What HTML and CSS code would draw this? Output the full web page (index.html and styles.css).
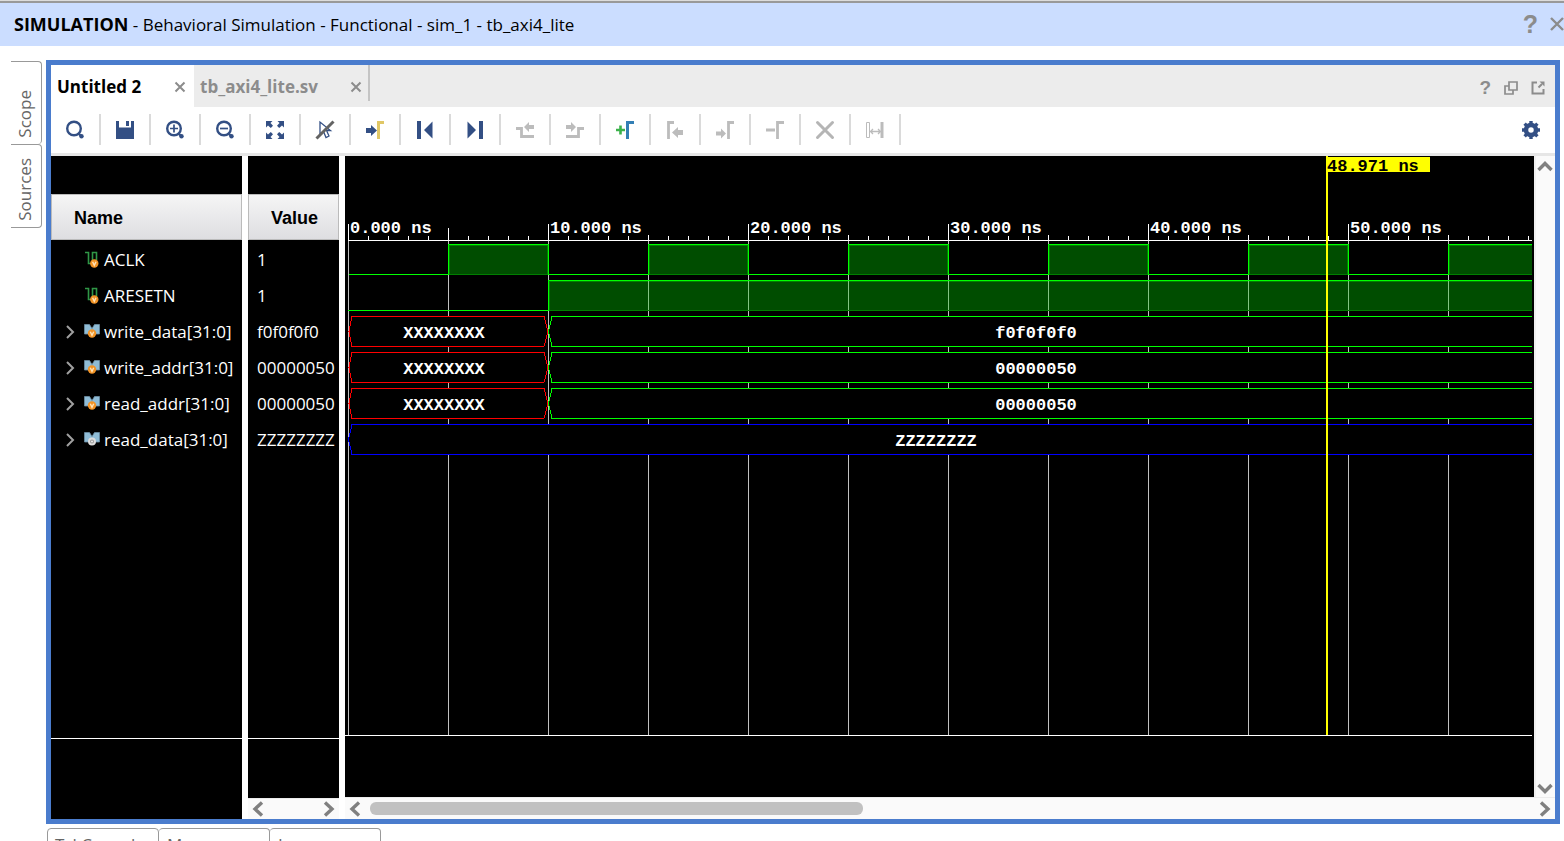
FILE: index.html
```html
<!DOCTYPE html>
<html lang="en">
<head>
<meta charset="utf-8">
<title>Behavioral Simulation</title>
<link rel="stylesheet" href="styles.css">
</head>
<body>
<header class="titlebar">
  <h1 class="title"><strong>SIMULATION</strong> - Behavioral Simulation - Functional - sim_1 - tb_axi4_lite</h1>
  <button class="plain help" aria-label="Help">?</button>
  <button class="plain" aria-label="Close"><svg width="14" height="14" viewBox="0 0 14 14"><path d="M1 1L13 13M13 1L1 13" stroke="#8c8c8c" stroke-width="2.400"/></svg></button>
</header>

<div class="workspace">
  <nav class="side-tabs">
    <button class="side-tab"><span>Scope</span></button>
    <button class="side-tab"><span>Sources</span></button>
  </nav>

  <main class="panel">
    <div class="tabbar">
      <div class="tab active">
        <button class="plain tab-name">Untitled 2</button>
        <button class="plain" aria-label="Close Untitled 2"><svg width="12" height="12" viewBox="0 0 12 12"><path d="M1.500 1.500L10.500 10.500M10.500 1.500L1.500 10.500" stroke="#8c8c8c" stroke-width="2"/></svg></button>
      </div>
      <div class="tab">
        <button class="plain tab-name">tb_axi4_lite.sv</button>
        <button class="plain" aria-label="Close tb_axi4_lite.sv"><svg width="12" height="12" viewBox="0 0 12 12"><path d="M1.500 1.500L10.500 10.500M10.500 1.500L1.500 10.500" stroke="#8c8c8c" stroke-width="2"/></svg></button>
      </div>
      <div class="window-tools">
        <button class="plain help-small" aria-label="Help">?</button>
        <button class="plain" aria-label="Restore"><svg width="14" height="14" viewBox="0 0 14 14" fill="none" stroke="#8c8c8c" stroke-width="1.700"><path d="M5 1h8v8H5zM5 5H1V13h8V9"/></svg></button>
        <button class="plain" aria-label="Float"><svg width="14" height="14" viewBox="0 0 14 14" fill="none" stroke="#8c8c8c" stroke-width="2"><path d="M6 1.500H1.500V12.500H12.500V8M7.500 6.500L11 3"/><path d="M8.500 0.500h5v5z" fill="#8c8c8c" stroke="none"/></svg></button>
      </div>
    </div>

    <div class="toolbar">
      <button class="tool" aria-label="Search"><svg width="20" height="20" viewBox="0 0 20 20"><circle cx="9" cy="8.500" r="6.800" fill="none" stroke="#334f84" stroke-width="2.400"/><path d="M13.500 13.500L16 16" stroke="#334f84" stroke-width="2.400"/><circle cx="16.500" cy="16.300" r="2.200" fill="#334f84"/></svg></button>
      <button class="tool" aria-label="Save"><svg width="20" height="20" viewBox="0 0 20 20" fill="#334f84"><path d="M1 1h3v6.500h12V1h3v18H1z"/><path d="M11 1h3v5h-3z"/></svg></button>
      <button class="tool" aria-label="Zoom in"><svg width="20" height="20" viewBox="0 0 20 20"><circle cx="9" cy="8.500" r="6.800" fill="none" stroke="#334f84" stroke-width="2.400"/><path d="M13.500 13.500L16 16" stroke="#334f84" stroke-width="2.400"/><circle cx="16.500" cy="16.300" r="2.200" fill="#334f84"/><path d="M5 8.500h8M9 4.500v8" stroke="#334f84" stroke-width="1.700"/></svg></button>
      <button class="tool" aria-label="Zoom out"><svg width="20" height="20" viewBox="0 0 20 20"><circle cx="9" cy="8.500" r="6.800" fill="none" stroke="#334f84" stroke-width="2.400"/><path d="M13.500 13.500L16 16" stroke="#334f84" stroke-width="2.400"/><circle cx="16.500" cy="16.300" r="2.200" fill="#334f84"/><path d="M5 8.500h8" stroke="#334f84" stroke-width="1.700"/></svg></button>
      <button class="tool" aria-label="Zoom fit"><svg width="20" height="20" viewBox="0 0 20 20" fill="#334f84"><path d="M1 1h6.500L5.500 3 8 5.800 5.800 8 3 5.500 1 7.500zM19 1v6.500L17 5.500 14.200 8 12 5.800 14.500 3 12.500 1zM1 19v-6.500L3 14.500 5.800 12 8 14.200 5.500 17 7.500 19zM19 19h-6.500L14.500 17 12 14.200 14.200 12 17 14.500 19 12.500z"/></svg></button>
      <button class="tool" aria-label="Clear selection"><svg width="20" height="20" viewBox="0 0 20 20"><path d="M5 2V14L8.500 11.500 11 17.500 14 16 11.500 10.500H15.500z" fill="#fff" stroke="#334f84" stroke-width="1.300"/><path d="M1.500 18.500L18.500 1.500" stroke="#636363" stroke-width="3"/></svg></button>
      <button class="tool" aria-label="Go to cursor"><svg width="20" height="20" viewBox="0 0 20 20"><path d="M1 8h5V5l6 5.500L6 16v-3H1z" fill="#334f84"/><path d="M13.500 19V2.500H19" fill="none" stroke="#e0c766" stroke-width="3"/></svg></button>
      <button class="tool" aria-label="Go to start"><svg width="20" height="20" viewBox="0 0 20 20" fill="#334f84"><path d="M2 1h4v18H2zM17.500 1.500v17L9 10z"/></svg></button>
      <button class="tool" aria-label="Go to end"><svg width="20" height="20" viewBox="0 0 20 20" fill="#334f84"><path d="M14 1h4v18h-4zM2.500 1.500v17L11 10z"/></svg></button>
      <button class="tool" aria-label="Previous transition"><svg width="20" height="20" viewBox="0 0 20 20"><path d="M1 8.500H6.500V16.500H19" fill="none" stroke="#bcbcbc" stroke-width="2.800"/><path d="M9 7l5-5v3h5v4h-5v3z" fill="#bcbcbc"/></svg></button>
      <button class="tool" aria-label="Next transition"><svg width="20" height="20" viewBox="0 0 20 20"><path d="M19 8.500H13.500V16.500H1" fill="none" stroke="#bcbcbc" stroke-width="2.800"/><path d="M11 7L6 2v3H1v4h5v3z" fill="#bcbcbc"/></svg></button>
      <button class="tool" aria-label="Add marker"><svg width="20" height="20" viewBox="0 0 20 20" fill="none"><path d="M1 10h9M5.500 5.500v9" stroke="#3cb24b" stroke-width="2.600"/><path d="M12.500 19V2.500H19" stroke="#337fb5" stroke-width="3"/></svg></button>
      <button class="tool" aria-label="Previous marker"><svg width="20" height="20" viewBox="0 0 20 20"><path d="M3.500 19V2.500H9" fill="none" stroke="#bcbcbc" stroke-width="2.800"/><path d="M7 12.500L13 7v3h5v5h-5v3z" fill="#bcbcbc"/></svg></button>
      <button class="tool" aria-label="Next marker"><svg width="20" height="20" viewBox="0 0 20 20"><path d="M13.500 19V2.500H19" fill="none" stroke="#bcbcbc" stroke-width="2.800"/><path d="M11 13.500L6 8.500v3H1v4h5v3z" fill="#bcbcbc"/></svg></button>
      <button class="tool" aria-label="Remove marker"><svg width="20" height="20" viewBox="0 0 20 20" fill="none" stroke="#bcbcbc" stroke-width="2.800"><path d="M1 10h9M12.500 19V2.500H19"/></svg></button>
      <button class="tool" aria-label="Remove all"><svg width="20" height="20" viewBox="0 0 20 20"><path d="M2.500 2.500L17.500 17.500M17.500 2.500L2.500 17.500" stroke="#b5b5b5" stroke-width="3" stroke-linecap="round"/></svg></button>
      <button class="tool" aria-label="Measure"><svg width="20" height="20" viewBox="0 0 20 20" fill="none" stroke="#bcbcbc"><path d="M1.500 2.500h3v15h-3z"/><path d="M17 2v16" stroke-width="3"/><path d="M6 11.500h9M8 9L5.500 11.500 8 14M13 9l2.500 2.500L13 14" stroke-width="1.300"/></svg></button>
      <button class="plain settings" aria-label="Settings"><svg width="20" height="20" viewBox="0 0 20 20" fill="none" stroke="#334f84"><circle cx="10" cy="10" r="5" stroke-width="4.500"/><path d="M10 1v3M10 16v3M1 10h3M16 10h3M3.600 3.600l2 2M14.400 14.400l2 2M3.600 16.400l2-2M14.400 5.600l2-2" stroke-width="3.400"/></svg></button>
    </div>

    <div class="viewer">
      <section class="column names">
        <div class="column-body">
          <table>
            <thead><tr><th>Name</th></tr></thead>
            <tbody>
              <tr><td><div class="signal"><span class="chevron"></span><svg class="kind" viewBox="0 0 16 18"><use href="#scalar"/></svg>ACLK</div></td></tr>
              <tr><td><div class="signal"><span class="chevron"></span><svg class="kind" viewBox="0 0 16 18"><use href="#scalar"/></svg>ARESETN</div></td></tr>
              <tr><td><div class="signal"><svg class="chevron" viewBox="0 0 10 14"><use href="#expand"/></svg><svg class="kind" viewBox="0 0 16 18"><use href="#bus"/><use href="#variable"/></svg>write_data[31:0]</div></td></tr>
              <tr><td><div class="signal"><svg class="chevron" viewBox="0 0 10 14"><use href="#expand"/></svg><svg class="kind" viewBox="0 0 16 18"><use href="#bus"/><use href="#variable"/></svg>write_addr[31:0]</div></td></tr>
              <tr><td><div class="signal"><svg class="chevron" viewBox="0 0 10 14"><use href="#expand"/></svg><svg class="kind" viewBox="0 0 16 18"><use href="#bus"/><use href="#variable"/></svg>read_addr[31:0]</div></td></tr>
              <tr><td><div class="signal"><svg class="chevron" viewBox="0 0 10 14"><use href="#expand"/></svg><svg class="kind" viewBox="0 0 16 18"><use href="#bus"/><circle cx="8" cy="10.500" r="3" fill="#999" stroke="#ddd" stroke-width="2"/><circle cx="8" cy="10.500" r="1" fill="#eee"/></svg>read_data[31:0]</div></td></tr>
            </tbody>
          </table>
        </div>
        <div class="column-foot tall"></div>
      </section>

      <section class="column values">
        <div class="column-body">
          <table>
            <thead><tr><th>Value</th></tr></thead>
            <tbody>
              <tr><td>1</td></tr>
              <tr><td>1</td></tr>
              <tr><td>f0f0f0f0</td></tr>
              <tr><td>00000050</td></tr>
              <tr><td>00000050</td></tr>
              <tr><td>ZZZZZZZZ</td></tr>
            </tbody>
          </table>
        </div>
        <div class="column-foot"></div>
        <div class="hscroll">
          <button class="plain" aria-label="Scroll values left"><svg width="12" height="16" viewBox="0 0 12 16"><use href="#left"/></svg></button>
          <button class="plain end" aria-label="Scroll values right"><svg width="12" height="16" viewBox="0 0 12 16"><use href="#right"/></svg></button>
        </div>
      </section>

      <section class="wave">
        <div class="wave-row">
          <div class="canvas">
            <svg class="plot" shape-rendering="crispEdges">
              <defs>
                <pattern id="grid" x="3" y="0" width="100" height="10" patternUnits="userSpaceOnUse"><rect width="1" height="10" fill="#c0c0c0"/></pattern>
                <pattern id="gridOver" x="3" y="0" width="100" height="10" patternUnits="userSpaceOnUse"><rect width="1" height="10" fill="#84c484"/></pattern>
                <pattern id="minor" x="3" y="80" width="20" height="4" patternUnits="userSpaceOnUse"><rect width="1" height="4" fill="#fff"/></pattern>
                <pattern id="mid" x="3" y="79" width="100" height="5" patternUnits="userSpaceOnUse"><rect width="1" height="5" fill="#fff"/></pattern>
                <pattern id="major" x="3" y="68" width="200" height="16" patternUnits="userSpaceOnUse"><rect width="1" height="16" fill="#fff"/></pattern>
                <pattern id="clock" x="3" y="88" width="200" height="31" patternUnits="userSpaceOnUse">
                  <rect x="1" width="99" height="31" fill="#000"/>
                  <rect y="30" width="100" height="1" fill="#0f0"/>
                  <rect x="100" width="100" height="31" fill="#008000"/>
                  <rect x="102" y="2" width="97" height="28" fill="#004d00"/>
                  <rect x="100" width="100" height="1" fill="#0f0"/>
                  <rect x="100" width="1" height="31" fill="#0f0"/>
                  <rect width="1" height="31" fill="#0f0"/>
                </pattern>
              </defs>
              <rect x="3" y="85" width="100%" height="100%" fill="url(#grid)"/>
              <rect x="3" y="80" width="100%" height="4" fill="url(#minor)"/>
              <rect x="3" y="79" width="100%" height="5" fill="url(#mid)"/>
              <rect x="3" y="68" width="100%" height="16" fill="url(#major)"/>
              <rect x="103" y="72" width="1" height="12" fill="#fff"/>
              <rect x="3" y="84" width="100%" height="1" fill="#fff"/>
              <g class="mono">
                <text x="5" y="77">0.000 ns</text><text x="205" y="77">10.000 ns</text><text x="405" y="77">20.000 ns</text>
                <text x="605" y="77">30.000 ns</text><text x="805" y="77">40.000 ns</text><text x="1005" y="77">50.000 ns</text>
              </g>

              <rect x="4" y="88" width="100%" height="31" fill="url(#clock)"/>

              <rect x="3" y="154" width="200" height="1" fill="#0f0"/>
              <rect x="203" y="124" width="100%" height="31" fill="#008000"/>
              <rect x="205" y="126" width="100%" height="28" fill="#004d00"/>
              <rect x="205" y="125" width="100%" height="29" fill="url(#gridOver)"/>
              <rect x="203" y="124" width="100%" height="1" fill="#0f0"/>
              <rect x="203" y="124" width="1" height="31" fill="#0f0"/>

              <g id="rowA">
                <path d="M4 175.500L7 160.500H199L203 175.500L199 190.500H7z" fill="#000" stroke="#f00"/>
                <rect x="207" y="160" width="100%" height="31" fill="#000"/>
                <path d="M208 160.500H207L203.500 175.500L207 190.500H208" fill="#000" stroke="#0f0"/>
                <rect x="207" y="160" width="100%" height="1" fill="#0f0"/>
                <rect x="207" y="190" width="100%" height="1" fill="#0f0"/>
              </g>
              <use href="#rowA" y="36"/>
              <use href="#rowA" y="72"/>
              <rect x="7" y="268" width="100%" height="31" fill="#000"/>
              <path d="M8 268.500H7L3.500 283.500L7 298.500H8" fill="#000" stroke="#00f"/>
              <rect x="7" y="268" width="100%" height="1" fill="#00f"/>
              <rect x="7" y="298" width="100%" height="1" fill="#00f"/>

              <g class="mono centered">
                <text x="99" y="182">XXXXXXXX</text><text x="99" y="218">XXXXXXXX</text><text x="99" y="254">XXXXXXXX</text>
                <text x="691" y="182">f0f0f0f0</text><text x="691" y="218">00000050</text><text x="691" y="254">00000050</text>
                <text x="591" y="290">ZZZZZZZZ</text>
              </g>
              <rect x="981" y="0" width="2" height="100%" fill="#ff0"/>
              <rect x="981" y="1" width="104" height="15" fill="#ff0"/>
              <text class="mono dark" x="982" y="15">48.971 ns</text>
            </svg>
          </div>
          <div class="vscroll">
            <button class="plain" aria-label="Scroll up"><svg width="16" height="12" viewBox="0 0 16 12"><path d="M1.500 10L8 3.500 14.500 10" fill="none" stroke="#808080" stroke-width="3.400"/></svg></button>
            <button class="plain" aria-label="Scroll down"><svg width="16" height="12" viewBox="0 0 16 12"><path d="M1.500 2L8 8.500 14.500 2" fill="none" stroke="#808080" stroke-width="3.400"/></svg></button>
          </div>
        </div>
        <div class="hscroll">
          <button class="plain" aria-label="Scroll left"><svg width="12" height="16" viewBox="0 0 12 16"><use href="#left"/></svg></button>
          <div class="thumb"></div>
          <button class="plain end" aria-label="Scroll right"><svg width="12" height="16" viewBox="0 0 12 16"><use href="#right"/></svg></button>
        </div>
      </section>
    </div>
  </main>
</div>

<nav class="bottom-tabs">
  <button class="bottom-tab">Tcl Console</button>
  <button class="bottom-tab">Messages</button>
  <button class="bottom-tab">Log</button>
</nav>

<svg class="symbols" width="0" height="0" aria-hidden="true">
  <defs>
    <path id="left" d="M10 1.500L3 8l7 6.500" fill="none" stroke="#808080" stroke-width="3.400"/>
    <path id="right" d="M2 1.500L9 8l-7 6.500" fill="none" stroke="#808080" stroke-width="3.400"/>
    <path id="expand" d="M1 1L7 7 1 13" fill="none" stroke="#a0a0a0" stroke-width="2"/>
    <g id="variable"><circle cx="8" cy="10.500" r="4.200" fill="#f29325"/><path d="M6.300 8.800L8 12.300 9.700 8.800" fill="none" stroke="#ffe3b8" stroke-width="1.400"/></g>
    <path id="bus" d="M.5 1.500H5.500L8 5.500 10.500 1.500H15.500V11H11.500L8 12.500 4.500 11H.5z" fill="#8fbcd6" stroke="#6c8ea3" stroke-width=".8"/>
    <g id="scalar"><path d="M1 1.500H4.500V12.500H8.500V1.500H12.500V9" fill="none" stroke="#2f9646" stroke-width="1.600"/><circle cx="10.300" cy="12.500" r="4.200" fill="#f29325"/><path d="M8.600 10.800L10.300 14.300 12 10.800" fill="none" stroke="#ffe3b8" stroke-width="1.400"/></g>
  </defs>
</svg>
</body>
</html>
```
FILE: styles.css
```css
* { box-sizing: border-box; }

body {
  margin: 0;
  height: 100vh;
  display: flex;
  flex-direction: column;
  overflow: hidden;
  background: #fff;
  color: #000;
  font-family: "Open Sans", "Noto Sans", sans-serif;
  font-size: 17px;
  line-height: 24px;
}

button { font: inherit; color: inherit; }
svg { display: block; }

.plain {
  display: flex;
  align-items: center;
  padding: 0;
  border: 0;
  background: none;
}

.symbols { position: absolute; }

/* Title bar */
.titlebar {
  flex: none;
  display: flex;
  align-items: center;
  height: 46px;
  padding-left: 14px;
  border-top: 1px solid #dcdcdc;
  background: #cbddff;
  box-shadow: inset 0 2px #999;
}

.title {
  flex: 1;
  margin: 0;
  padding-top: 2px;
  font-size: 17px;
  font-weight: 400;
}

.title strong { font-size: 18px; }

.help {
  margin-right: 12px;
  padding-top: 2px;
  color: #8c8c8c;
  font: bold 25px "Liberation Sans", Arial, sans-serif;
}

/* Main area */
.workspace {
  flex: 1;
  min-height: 0;
  display: flex;
  padding: 14px 4px 4px 11px;
}

.side-tabs {
  flex: none;
  width: 35px;
  padding: 1px 4px 0 0;
}

.side-tab {
  display: flex;
  align-items: flex-end;
  justify-content: center;
  width: 31px;
  height: 83px;
  padding: 0 2px 6px 0;
  border: 1px solid #999;
  border-left: 0;
  border-bottom-width: 0;
  border-radius: 0 4px 4px 0;
  background: #fff;
  color: #666;
}

.side-tab:last-child {
  height: 84px;
  border-bottom-width: 1px;
}

.side-tab span {
  writing-mode: vertical-rl;
  transform: rotate(180deg);
}

.panel {
  flex: 1;
  min-width: 0;
  display: flex;
  flex-direction: column;
  border: 5px solid #4a7ccd;
}

.tabbar {
  flex: none;
  display: flex;
  height: 42px;
  background: #ececec;
}

.tab {
  display: flex;
  align-items: center;
  justify-content: space-between;
  width: 176px;
  height: 36px;
  padding: 8px 6px 0 6px;
  border-right: 2px solid #c4c4c4;
  color: #8c8c8c;
  font-weight: 700;
}

.tab.active {
  width: 143px;
  height: 42px;
  padding: 2px 8px 0 6px;
  border: 0;
  background: #fff;
  color: #000;
}

.window-tools {
  display: flex;
  align-items: center;
  gap: 13px;
  margin-left: auto;
  padding: 3px 10px 0 0;
}

.help-small {
  color: #8c8c8c;
  font: bold 19px "Liberation Sans", Arial, sans-serif;
}

/* Toolbar */
.toolbar {
  flex: none;
  display: flex;
  align-items: center;
  height: 49px;
  padding-bottom: 1px;
  border-bottom: 3px solid #e6e6e6;
}

.tool {
  display: flex;
  align-items: center;
  justify-content: center;
  width: 50px;
  height: 31px;
  padding: 0;
  border: 0;
  border-right: 2px solid #dadada;
  background: none;
}

.settings { margin: 0 14px 0 auto; }

/* Signal columns */
.viewer {
  flex: 1;
  min-height: 0;
  display: flex;
  gap: 6px;
}

.column {
  flex: none;
  display: flex;
  flex-direction: column;
  overflow: hidden;
  background: #fff;
  color: #fff;
}

.names { width: 191px; }
.values { width: 91px; }

.column-body {
  flex: 1;
  min-height: 0;
  padding-top: 38px;
  border-bottom: 1px solid #fff;
  background: #000;
}

.column-foot {
  flex: none;
  height: 59px;
  background: #000;
}

.column-foot.tall { height: 80px; }

table {
  width: 100%;
  border-collapse: separate;
  border-spacing: 0;
}

th {
  height: 46px;
  padding: 2px 0 0 22px;
  border: 1px solid #bbb;
  background: linear-gradient(#f5f5f5, #dedee1);
  color: #000;
  font: bold 18px "Liberation Sans", Arial, sans-serif;
  text-align: left;
}

td {
  height: 36px;
  padding: 3px 0 0 9px;
  white-space: nowrap;
}

.names td { padding-left: 15px; }

.signal {
  display: flex;
  align-items: center;
}

.chevron {
  flex: none;
  width: 10px;
  height: 14px;
  margin-right: 8px;
}

.kind {
  flex: none;
  width: 16px;
  height: 18px;
  margin-right: 4px;
}

/* Waveform */
.wave {
  flex: 1;
  min-width: 0;
  display: flex;
  flex-direction: column;
}

.wave-row {
  flex: 1;
  min-height: 0;
  display: flex;
}

.canvas {
  flex: 1;
  min-width: 0;
  padding: 0 2px 61px 0;
  background: #000;
}

.plot {
  width: 100%;
  height: 100%;
  border-bottom: 1px solid #fff;
}

.mono {
  fill: #fff;
  font: bold 17px "Liberation Mono", "Courier New", monospace;
}

.mono.dark { fill: #000; }
.centered { text-anchor: middle; }

.vscroll {
  flex: none;
  display: flex;
  flex-direction: column;
  justify-content: space-between;
  align-items: center;
  width: 21px;
  padding: 4px 2px 2px 0;
  border-left: 2px solid #f0f0f0;
  background: #fafafa;
}

.hscroll {
  flex: none;
  display: flex;
  align-items: center;
  height: 21px;
  padding: 0 4px;
  border-top: 1px solid #ececec;
  background: #fafafa;
}

.wave .hscroll { height: 22px; }

.thumb {
  width: 41%;
  height: 13px;
  margin-left: 9px;
  border-radius: 6px;
  background: #c1c1c1;
}

.end { margin-left: auto; }

/* Bottom tabs */
.bottom-tabs {
  flex: none;
  display: flex;
  height: 13px;
  padding-left: 47px;
  overflow: hidden;
}

.bottom-tab {
  width: 111px;
  height: 34px;
  padding: 3px 8px;
  border: 1px solid #999;
  border-left-width: 0;
  border-radius: 4px 4px 0 0;
  background: #fff;
  color: #666;
  text-align: left;
}

.bottom-tab:first-child {
  width: 112px;
  padding-left: 7px;
  border-left-width: 1px;
}
```
